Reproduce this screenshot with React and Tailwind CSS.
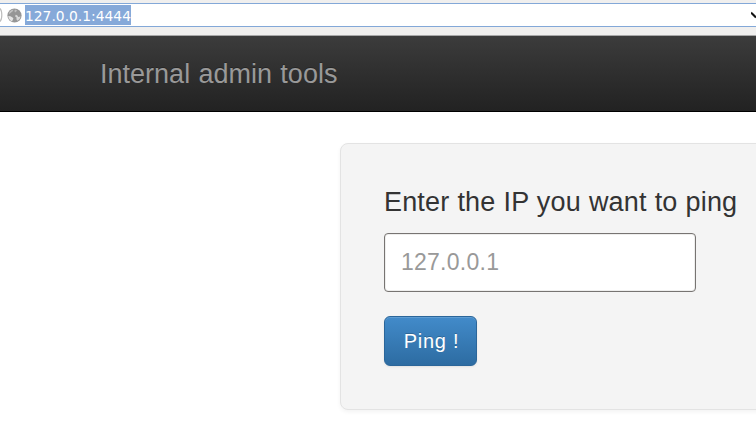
function GlobeIcon() {
  return (
    <svg className="size-[15px] shrink-0" viewBox="0 0 15 15">
      <circle cx="7.5" cy="7.5" r="7.1" fill="#969696" />
      <path d="M2.6 3.4 4.2 2.2 6.4 1.6 6 3 4.4 4.2 3 5.6 1.8 6Z" fill="#c2c2c2" />
      <path d="M1.2 8 3.4 8.2 5.6 9.4 6.4 10.6 5.6 12.2 5 13.4 3.4 12.4 1.8 10.4Z" fill="#e4e4e4" />
      <path d="M8 1.4 10 2.2 9.4 3.6 8 4.4 7.4 3Z" fill="#bdbdbd" />
      <path d="M8.8 6.8 10.4 7.4 11.2 9 13.6 8.4 12.6 11 10.6 12.8 9.4 11.2 9.6 9.4 8 8.2Z" fill="#d8d8d8" />
    </svg>
  );
}

function AddressBar() {
  return (
    <div className="h-[36px] shrink-0 border-b border-[#a8a8a8] bg-[#f0efee] pt-[3px]">
      <div className="flex h-[24px] items-center border-y border-[#83a8d8] bg-white">
        <svg className="h-[16px] w-[7px] shrink-0" viewBox="0 0 7 16">
          <path d="M0 1.5C2.4 4 2.4 12 0 14.5" fill="none" stroke="#bcbcbc" strokeWidth="1.2" />
        </svg>
        <GlobeIcon />
        <span className="ml-[3px] h-[20px] w-[106px] whitespace-nowrap bg-[#86a9d9] font-['DejaVu_Sans',sans-serif] text-[13.85px] leading-[23px] text-white">
          127.0.0.1:4444
        </span>
        <svg className="ml-auto h-[8px] w-[5px]" viewBox="0 0 5 8">
          <path d="M0 1.5 5 6.5" fill="none" stroke="#111" strokeWidth="2" />
        </svg>
      </div>
    </div>
  );
}

export default function App() {
  return (
    <div className="flex h-[430px] w-[756px] flex-col overflow-hidden bg-white font-['Liberation_Sans',Arial,sans-serif]">
      <AddressBar />
      <nav className="flex h-[76px] shrink-0 items-center border-b border-black bg-linear-to-b from-[#3c3c3c] to-[#222222] pl-[100px]">
        <span className="whitespace-nowrap text-[27px] leading-[30px] tracking-[0.01px] [word-spacing:0.8px] text-[#999999] [text-shadow:0_-1px_0_rgba(0,0,0,0.25)]">
          Internal admin tools
        </span>
      </nav>
      <main className="ml-[340px] mt-[31px] h-[267px] w-[450px] shrink-0 rounded-[8px] border border-[#e3e3e3] bg-[#f4f4f4] pl-[43px] pt-[43px] shadow-[0_2px_4px_rgba(0,0,0,0.05)]">
        <label className="block h-[46px] whitespace-nowrap text-[27px] leading-[30px] tracking-[0.16px] [word-spacing:0.4px] text-[#333333]">
          Enter the IP you want to ping
        </label>
        <input
          className="block h-[59px] w-[312px] rounded-[4px] border border-[#777472] bg-white px-[16px] text-[23px] tracking-[0.25px] text-[#555555] shadow-[inset_0_0_0_1px_#eeeeed] outline-none placeholder:text-[#999999]"
          placeholder="127.0.0.1"
        />
        <button className="mt-[24px] h-[50px] w-[93px] whitespace-nowrap rounded-[6px] border border-[#2b669a] bg-linear-to-b from-[#428bca] to-[#2d6ca2] pl-[2px] text-[20px] tracking-[0.7px] text-white shadow-[inset_0_1px_0_rgba(255,255,255,0.15),0_1px_2px_rgba(0,0,0,0.075)] [text-shadow:0_-1px_0_rgba(0,0,0,0.2)]">
          Ping !
        </button>
      </main>
    </div>
  );
}
